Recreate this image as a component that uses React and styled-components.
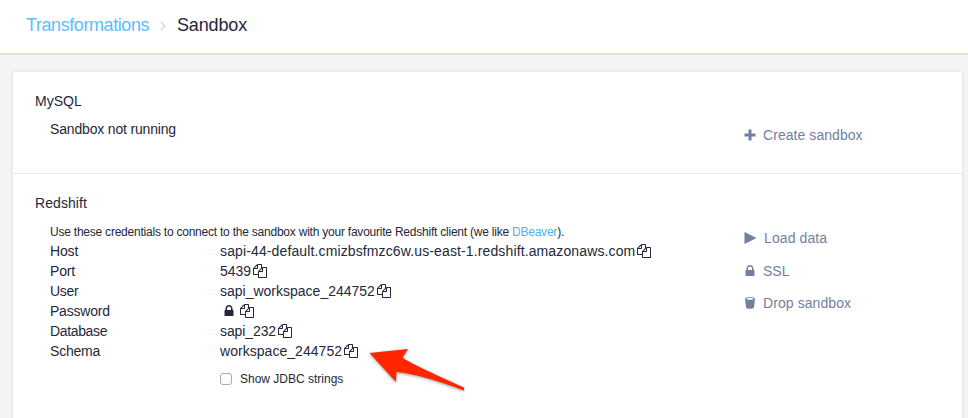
import React from 'react';
import styled, { createGlobalStyle } from 'styled-components';

const Global = createGlobalStyle`
  * { box-sizing: border-box; }
  body {
    margin: 0;
    background: #f4f4f7;
    color: #24283a;
    font: 14px/20px "Liberation Sans", Arial, sans-serif;
    overflow: hidden;
  }
`;

const Page = styled.div`
  height: 418px;
  overflow: hidden;
`;

const Header = styled.header`
  display: flex;
  align-items: center;
  height: 55px;
  padding: 0 26px 4px;
  background: #fff;
  border-bottom: 2px solid #e9e0d0;
  font-size: 18px;
`;

const Crumb = styled.span`
  color: ${(p) => (p.$link ? '#5dbcff' : '#24283a')};
  letter-spacing: ${(p) => p.$track || 0}px;
  white-space: nowrap;
  width: ${(p) => p.$w}px;
`;

const Chevron = styled.svg`
  width: 6px;
  height: 10px;
  margin: 2px 11px 0;
  fill: none;
  stroke: #d3d6df;
  stroke-width: 1.5;
`;

const Panel = styled.main`
  width: 953px;
  height: 360px;
  margin: 15px 0 0 11px;
  background: #fff;
  border: 2px solid #ebebed;
  border-bottom: 0;
  border-radius: 5px 5px 0 0;
`;

const Section = styled.section`
  display: grid;
  grid-template-columns: 708px 1fr;
  height: ${(p) => p.$h}px;
  padding: 19px 0 0 22px;
  border-bottom: 1px solid #e6e6ed;
`;

const Title = styled.h2`
  margin: 0;
  font-size: 14px;
  font-weight: 400;
  letter-spacing: ${(p) => p.$track || 0}px;
`;

const Body = styled.div`
  padding: ${(p) => p.$top}px 0 0 15px;
`;

const Text = styled.span`
  letter-spacing: ${(p) => p.$track || 0}px;
  white-space: nowrap;
`;

const Hint = styled.p`
  margin: 0;
  font-size: 12px;
  line-height: 18px;
  letter-spacing: -0.225px;
  white-space: nowrap;
`;

const Link = styled.a`
  color: #4fb0fa;
`;

const Row = styled.div`
  display: grid;
  grid-template-columns: 170px 1fr;
  height: 20px;
`;

const Value = styled.div`
  display: flex;
  align-items: center;
  gap: 2px;
`;

const Icon = styled.svg`
  flex: none;
  width: ${(p) => p.$size || 14}px;
  height: ${(p) => p.$size || 14}px;
  fill: currentColor;
`;

const MaskedLock = styled(Icon)`
  margin: 0 2px;
`;

const Check = styled.label`
  display: flex;
  align-items: center;
  gap: 8px;
  height: 20px;
  margin: 8px 0 0 170px;
  font-size: 12px;
`;

const Box = styled.input`
  appearance: none;
  width: 12px;
  height: 12px;
  margin: 0;
  background: #fff;
  border: 1px solid #aaa;
  border-radius: 3px;
`;

const Actions = styled.nav`
  display: flex;
  flex-direction: column;
  gap: 12.5px;
  padding-top: ${(p) => p.$top}px;
`;

const Action = styled.a`
  display: flex;
  align-items: center;
  height: 20px;
  gap: ${(p) => p.$gap || 6}px;
  color: #727f9f;
`;

const LOCK =
  'M640 768h512v-192q0-106-75-181t-181-75-181 75-75 181v192zm832 96v576q0 40-28 68t-68 28h-960q-40 0-68-28t-28-68v-576q0-40 28-68t68-28h32v-192q0-184 132-316t316-132 316 132 132 316v192h32q40 0 68 28t28 68z';
const COPY =
  'M1696 384q40 0 68 28t28 68v1216q0 40-28 68t-68 28h-960q-40 0-68-28t-28-68v-288h-544q-40 0-68-28t-28-68v-672q0-40 20-88t48-76l408-408q28-28 76-48t88-20h416q40 0 68 28t28 68v328q68-40 128-40h416zm-544 213l-299 299h299v-299zm-640-384l-299 299h299v-299zm196 647l316-316v-416h-384v416q0 40-28 68t-68 28h-416v640h512v-256q0-40 20-88t48-76zm956 804v-1152h-384v416q0 40-28 68t-68 28h-416v640h896z';

const Pointer = styled.svg`
  position: absolute;
  left: 364px;
  top: 340px;
  width: 110px;
  height: 60px;
  overflow: visible;
  filter: drop-shadow(0 1.5px 1.5px rgba(0, 0, 0, 0.4));
`;

const CopyIcon = () => (
  <Icon viewBox="0 0 1792 1792"><path d={COPY} /></Icon>
);

const rows = [
  { label: 'Host', lt: -0.15, value: 'sapi-44-default.cmizbsfmzc6w.us-east-1.redshift.amazonaws.com', vt: 0.125 },
  { label: 'Port', lt: -0.2, value: '5439', vt: 0 },
  { label: 'User', lt: -0.3, value: 'sapi_workspace_244752', vt: 0 },
  { label: 'Password', lt: -0.22 },
  { label: 'Database', lt: -0.35, value: 'sapi_232', vt: -0.1 },
  { label: 'Schema', lt: -0.2, value: 'workspace_244752', vt: 0.04 },
];

export default function App() {
  return (
    <Page>
      <Global />
      <Header>
        <Crumb $link $w={123} $track={-0.42}>Transformations</Crumb>
        <Chevron viewBox="0 0 6 10"><path d="M1 1l4 4-4 4" /></Chevron>
        <Crumb $w={80} $track={-0.15}>Sandbox</Crumb>
      </Header>
      <Panel>
        <Section $h={102}>
          <div>
            <Title>MySQL</Title>
            <Body $top={8}><Text $track={-0.17}>Sandbox not running</Text></Body>
          </div>
          <Actions $top={34}>
            <Action>
              <Icon viewBox="0 0 14 14"><path d="M5.5 1.500h3v4h4v3h-4v4h-3v-4h-4v-3h4z" /></Icon>
              <Text $track={0.06}>Create sandbox</Text>
            </Action>
          </Actions>
        </Section>
        <Section $h={270}>
          <div>
            <Title $track={0.08}>Redshift</Title>
            <Body $top={10}>
              <Hint>
                Use these credentials to connect to the sandbox with your favourite Redshift client (we like <Link>DBeaver</Link>).
              </Hint>
              {rows.map((r) => (
                <Row key={r.label}>
                  <Text $track={r.lt}>{r.label}</Text>
                  <Value>
                    {r.value ? (
                      <Text $track={r.vt}>{r.value}</Text>
                    ) : (
                      <MaskedLock viewBox="0 0 1792 1792"><path d={LOCK} /></MaskedLock>
                    )}
                    <CopyIcon />
                  </Value>
                </Row>
              ))}
              <Check><Box type="checkbox" /><Text>Show JDBC strings</Text></Check>
            </Body>
          </div>
          <Actions $top={35}>
            <Action $gap={7}>
              <Icon viewBox="0 0 14 14"><path d="M1.500 1L13.500 7 1.500 13z" /></Icon>
              <Text $track={0.1}>Load data</Text>
            </Action>
            <Action>
              <Icon viewBox="0 0 1792 1792"><path d={LOCK} /></Icon>
              <Text>SSL</Text>
            </Action>
            <Action>
              <Icon viewBox="0 0 14 14">
                <path fillRule="evenodd" d="M2 2.700C2 .8 12 .8 12 2.700L11 11.500C10.700 13.200 3.300 13.200 3 11.500zM3 2.700C4.500 4 9.500 4 11 2.700 9.500 1.700 4.500 1.700 3 2.700z" />
              </Icon>
              <Text $track={0.08}>Drop sandbox</Text>
            </Action>
          </Actions>
        </Section>
      </Panel>
      <Pointer viewBox="364 340 110 60">
        <path fill="#ff2600" d="M369.500 353L408 349 402.500 357.500Q409 363 464 387.500V390.500Q420 374 396.500 372L396 382z" />
      </Pointer>
    </Page>
  );
}
